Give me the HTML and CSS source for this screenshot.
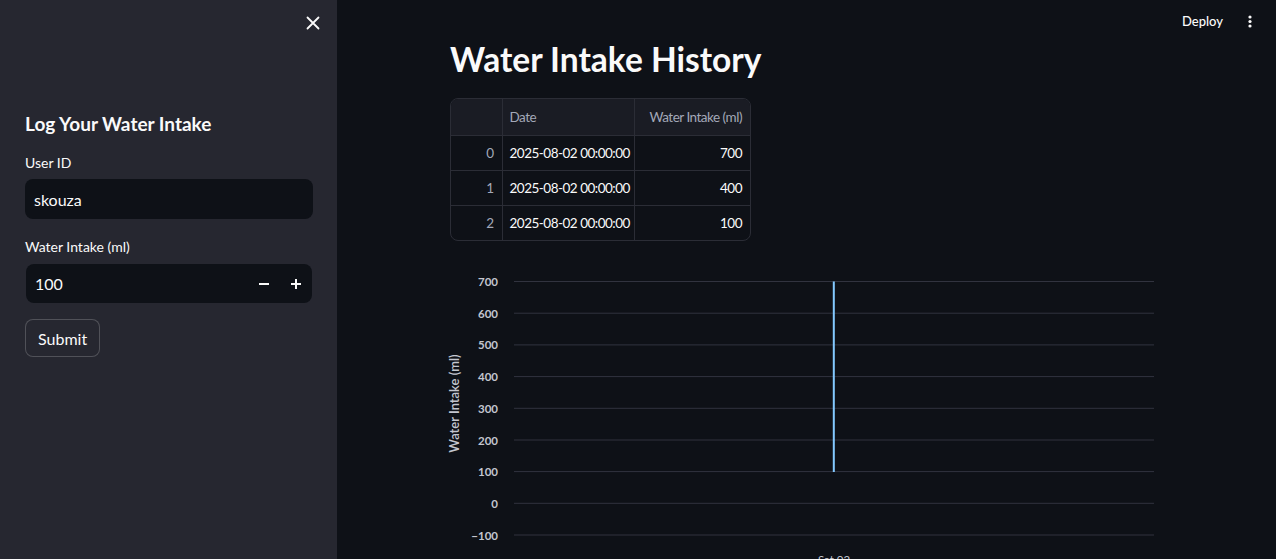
FILE: index.html
```html
<!DOCTYPE html>
<html lang="en">
<head>
<meta charset="utf-8">
<title>Water Intake</title>
<link rel="stylesheet" href="styles.css">
</head>
<body>
<div class="app">
  <aside class="sidebar">
    <div class="sb-top">
      <button class="close" aria-label="Close sidebar">
        <svg width="14" height="14" viewBox="0 0 14 14"><path d="M1.5 1.5 L12.5 12.5 M12.5 1.5 L1.5 12.5" stroke="#fafafa" stroke-width="1.8" stroke-linecap="round"/></svg>
      </button>
    </div>
    <div class="sb-content">
      <h2 class="sb-title">Log Your Water Intake</h2>
      <div class="field">
        <label class="label">User ID</label>
        <div class="input">skouza</div>
      </div>
      <div class="field">
        <label class="label">Water Intake (ml)</label>
        <div class="input num">
          <span>100</span>
          <span class="steps">
            <svg width="12" height="12" viewBox="0 0 12 12"><path d="M1 6 H11" stroke="#fafafa" stroke-width="2"/></svg>
            <svg width="12" height="12" viewBox="0 0 12 12"><path d="M1 6 H11 M6 1 V11" stroke="#fafafa" stroke-width="2"/></svg>
          </span>
        </div>
      </div>
      <button class="submit">Submit</button>
    </div>
  </aside>
  <main class="main">
    <header class="topbar">
      <span class="deploy">Deploy</span>
      <svg class="kebab" width="4" height="13" viewBox="0 0 4 13"><circle cx="2" cy="2" r="1.6" fill="#fafafa"/><circle cx="2" cy="6.5" r="1.6" fill="#fafafa"/><circle cx="2" cy="11" r="1.6" fill="#fafafa"/></svg>
    </header>
    <div class="content">
      <h1 class="title">Water Intake History</h1>
      <div class="table-wrap">
        <table class="df">
          <colgroup><col class="c-idx"><col class="c-date"><col class="c-num"></colgroup>
          <thead>
            <tr><th class="idx"></th><th>Date</th><th class="num">Water Intake (ml)</th></tr>
          </thead>
          <tbody>
            <tr><td class="idx">0</td><td>2025-08-02 00:00:00</td><td class="num">700</td></tr>
            <tr><td class="idx">1</td><td>2025-08-02 00:00:00</td><td class="num">400</td></tr>
            <tr><td class="idx">2</td><td>2025-08-02 00:00:00</td><td class="num">100</td></tr>
          </tbody>
        </table>
      </div>
      <svg class="chart" width="712" height="310" viewBox="0 0 712 310">
        <g class="grid" stroke="#31333f" stroke-width="1">
          <line x1="66" x2="706" y1="20.5" y2="20.5"/>
          <line x1="66" x2="706" y1="52.2" y2="52.2"/>
          <line x1="66" x2="706" y1="83.9" y2="83.9"/>
          <line x1="66" x2="706" y1="115.6" y2="115.6"/>
          <line x1="66" x2="706" y1="147.3" y2="147.3"/>
          <line x1="66" x2="706" y1="179" y2="179"/>
          <line x1="66" x2="706" y1="210.6" y2="210.6"/>
          <line x1="66" x2="706" y1="242.3" y2="242.3"/>
          <line x1="66" x2="706" y1="274" y2="274"/>
        </g>
        <g class="ticks" text-anchor="end">
          <text x="50" y="25">700</text>
          <text x="50" y="56.7">600</text>
          <text x="50" y="88.4">500</text>
          <text x="50" y="120.1">400</text>
          <text x="50" y="151.8">300</text>
          <text x="50" y="183.5">200</text>
          <text x="50" y="215.1">100</text>
          <text x="50" y="246.8">0</text>
          <text x="50" y="278.5">−100</text>
        </g>
        <text class="ytitle" transform="translate(10.5 142.5) rotate(-90)" text-anchor="middle">Water Intake (ml)</text>
        <rect x="384.8" y="20.5" width="2" height="190.5" fill="#83c9ff"/>
        <text class="xtick" x="386" y="303" text-anchor="middle">Sat 02</text>
      </svg>
    </div>
  </main>
</div>
</body>
</html>
```
FILE: styles.css
```css
* { box-sizing: border-box; }
html, body { margin: 0; padding: 0; }
body {
  width: 1276px;
  height: 559px;
  overflow: hidden;
  background: #0e1117;
  color: #fafafa;
  font-family: Lato, "Noto Sans", sans-serif;
}
.app {
  display: flex;
  height: 559px;
}
.sidebar {
  width: 337px;
  flex: 0 0 337px;
  background: #262730;
  display: flex;
  flex-direction: column;
}
.sb-top {
  flex: 0 0 46px;
  display: flex;
  justify-content: flex-end;
  align-items: center;
  padding-right: 17px;
}
.close {
  background: none;
  border: 0;
  padding: 0;
  width: 14px;
  height: 14px;
  display: flex;
}
.sb-content {
  padding: 0 24px 0 25px;
  display: flex;
  flex-direction: column;
  align-items: flex-start;
}
.sb-title {
  margin: 66px 0 0;
  font-size: 19px;
  font-weight: 700;
  line-height: 24px;
}
.field {
  width: 100%;
  display: flex;
  flex-direction: column;
}
.label {
  font-size: 14px;
  line-height: 20px;
  margin-top: 17px;
  margin-bottom: 6px;
}
.field + .field .label { margin-top: 18px; margin-bottom: 7px; }
.input {
  width: 100%;
  height: 40px;
  background: #0e1117;
  border-radius: 8px;
  display: flex;
  align-items: center;
  padding: 0 9px;
  font-size: 16px;
}
.input.num {
  width: 286px;
  margin-left: 1px;
  height: 39px;
  justify-content: space-between;
}
.steps {
  display: flex;
  gap: 20px;
  padding-right: 1px;
}
.steps svg { display: block; }
.submit {
  margin-top: 16px;
  height: 38px;
  padding: 0 12px;
  background: #262730;
  color: #fafafa;
  border: 1px solid rgba(250, 250, 250, 0.2);
  border-radius: 8px;
  font-family: inherit;
  font-size: 16px;
}
.main {
  flex: 1;
  display: flex;
  flex-direction: column;
  overflow: hidden;
}
.topbar {
  flex: 0 0 42px;
  display: flex;
  justify-content: flex-end;
  align-items: center;
  gap: 25px;
  padding-right: 24px;
}
.deploy {
  font-size: 13px;
  font-weight: 500;
}
.kebab { display: block; }
.content {
  flex: 0 0 auto;
  padding-left: 113px;
}
.title {
  margin: 0;
  font-size: 33.5px;
  line-height: 34px;
  font-weight: 700;
}
.table-wrap {
  margin-top: 22px;
  width: 301px;
  border: 1px solid #2b2d36;
  border-radius: 8px;
  overflow: hidden;
}
.df {
  border-collapse: collapse;
  table-layout: fixed;
  width: 100%;
  font-size: 13.5px;
  letter-spacing: -0.5px;
}
.c-idx { width: 51px; }
.c-date { width: 132px; }
.df th, .df td {
  height: 35px;
  padding: 0 8px 0 7px;
  border: 1px solid #2b2d36;
  text-align: left;
  font-weight: 400;
  white-space: nowrap;
}
.df th { height: 36px; }
.df tr > :first-child { border-left: 0; }
.df tr > :last-child { border-right: 0; }
.df thead th { border-top: 0; background: #1a1c24; color: #a3a8b8; }
.df tbody tr:last-child td { border-bottom: 0; }
.df .idx { text-align: right; color: #a3a8b8; }
.df .num { text-align: right; }
.chart {
  display: block;
  margin-top: 20px;
  margin-left: -2px;
}
.ticks text {
  font-size: 11.5px;
  font-weight: 700;
  fill: #c3c6cf;
}
.ytitle {
  font-size: 13px;
  font-weight: 600;
  fill: #c3c6cf;
}
.xtick {
  font-size: 11.5px;
  fill: #c3c6cf;
}
```
